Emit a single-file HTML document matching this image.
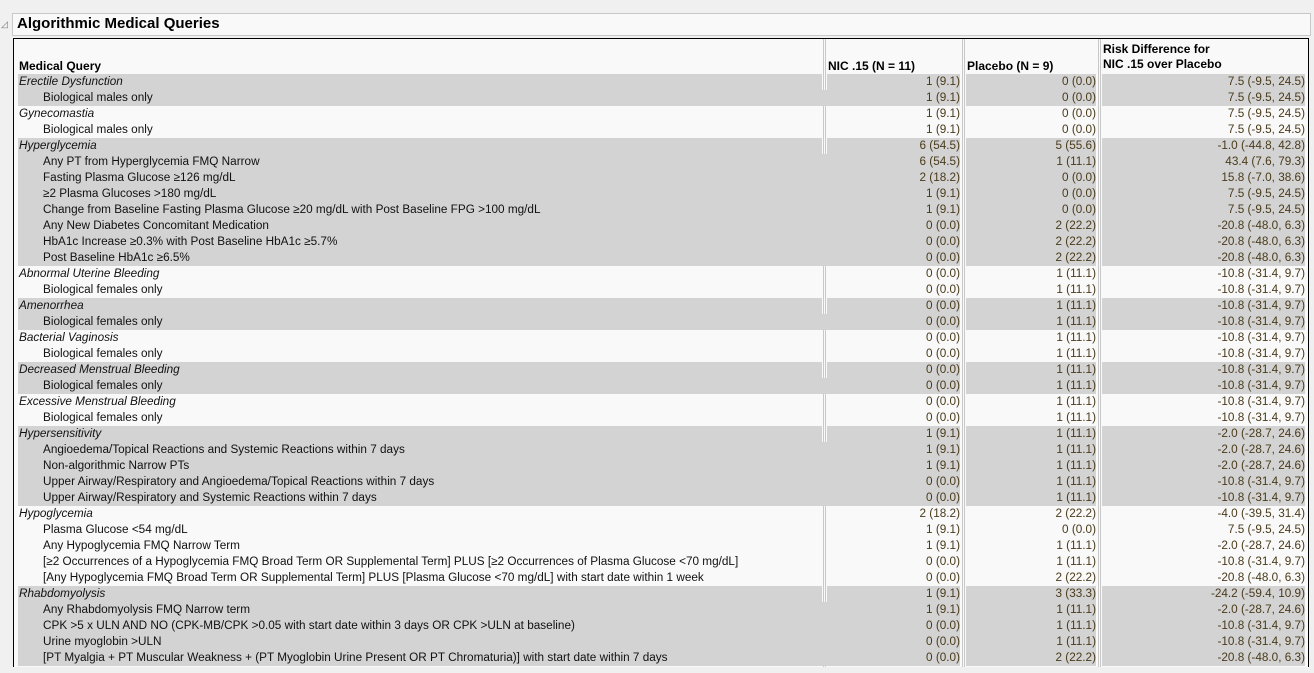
<!DOCTYPE html>
<html><head><meta charset="utf-8"><style>
body{margin:0;width:1314px;height:673px;background:#f0f0f0;font-family:"Liberation Sans",sans-serif;overflow:hidden;position:relative}
.title{position:absolute;left:12px;top:13px;width:1297px;height:21px;border:1px solid #c8c8c8;background:#f9f9f9}
.title span{position:absolute;left:4px;top:1px;font-weight:bold;font-size:15px;color:#000}
.tri{position:absolute;left:1px;top:19px;font-size:9px;color:#777}
.tbl{position:absolute;left:13px;top:38px;width:1294px;height:628px;border:1px solid #000;border-bottom:none;background:#f9f9f9;overflow:hidden}
.vl{position:absolute;top:0;height:640px;width:1px;background:#c8c8c8}
.h{position:absolute;font-weight:bold;font-size:12px;color:#000;line-height:15px}
.r{position:absolute;left:0;height:16px;width:1294px;font-size:11.75px;line-height:16px}
.r div{position:absolute;top:0;height:16px;white-space:nowrap}
.c1{left:4px;width:803px;padding-left:1px;color:#111}
.c2{left:813px;width:133px;text-align:right;color:#4a3a1a}
.c3{left:952px;width:130px;text-align:right;color:#4a3a1a}
.c4{left:1088px;width:203px;text-align:right;color:#4a3a1a}
.s div{background:#d3d3d3}
.c1 i{font-style:italic}
.in{padding-left:25px}
</style></head><body>
<div class="title"><span>Algorithmic Medical Queries</span></div>
<div class="tri">◿</div>
<div class="tbl">
<div class="vl" style="left:809px"></div><div class="vl" style="left:811px"></div>
<div class="vl" style="left:948px"></div><div class="vl" style="left:950px"></div>
<div class="vl" style="left:1084px"></div><div class="vl" style="left:1086px"></div>
<div class="h" style="left:5px;top:20px">Medical Query</div>
<div class="h" style="left:814px;top:20px">NIC .15 (N = 11)</div>
<div class="h" style="left:953px;top:20px">Placebo (N = 9)</div>
<div class="h" style="left:1089px;top:3px">Risk Difference for<br>NIC .15 over Placebo</div>

<div class="r s" style="top:35px"><div class="c1"><i>Erectile Dysfunction</i></div><div class="c2">1 (9.1)</div><div class="c3">0 (0.0)</div><div class="c4">7.5 (-9.5, 24.5)</div></div>
<div class="r s" style="top:51px"><div class="c1 in">Biological males only</div><div class="c2">1 (9.1)</div><div class="c3">0 (0.0)</div><div class="c4">7.5 (-9.5, 24.5)</div></div>
<div class="r" style="top:67px"><div class="c1"><i>Gynecomastia</i></div><div class="c2">1 (9.1)</div><div class="c3">0 (0.0)</div><div class="c4">7.5 (-9.5, 24.5)</div></div>
<div class="r" style="top:83px"><div class="c1 in">Biological males only</div><div class="c2">1 (9.1)</div><div class="c3">0 (0.0)</div><div class="c4">7.5 (-9.5, 24.5)</div></div>
<div class="r s" style="top:99px"><div class="c1"><i>Hyperglycemia</i></div><div class="c2">6 (54.5)</div><div class="c3">5 (55.6)</div><div class="c4">-1.0 (-44.8, 42.8)</div></div>
<div class="r s" style="top:115px"><div class="c1 in">Any PT from Hyperglycemia FMQ Narrow</div><div class="c2">6 (54.5)</div><div class="c3">1 (11.1)</div><div class="c4">43.4 (7.6, 79.3)</div></div>
<div class="r s" style="top:131px"><div class="c1 in">Fasting Plasma Glucose ≥126 mg/dL</div><div class="c2">2 (18.2)</div><div class="c3">0 (0.0)</div><div class="c4">15.8 (-7.0, 38.6)</div></div>
<div class="r s" style="top:147px"><div class="c1 in">≥2 Plasma Glucoses &gt;180 mg/dL</div><div class="c2">1 (9.1)</div><div class="c3">0 (0.0)</div><div class="c4">7.5 (-9.5, 24.5)</div></div>
<div class="r s" style="top:163px"><div class="c1 in">Change from Baseline Fasting Plasma Glucose ≥20 mg/dL with Post Baseline FPG &gt;100 mg/dL</div><div class="c2">1 (9.1)</div><div class="c3">0 (0.0)</div><div class="c4">7.5 (-9.5, 24.5)</div></div>
<div class="r s" style="top:179px"><div class="c1 in">Any New Diabetes Concomitant Medication</div><div class="c2">0 (0.0)</div><div class="c3">2 (22.2)</div><div class="c4">-20.8 (-48.0, 6.3)</div></div>
<div class="r s" style="top:195px"><div class="c1 in">HbA1c Increase ≥0.3% with Post Baseline HbA1c ≥5.7%</div><div class="c2">0 (0.0)</div><div class="c3">2 (22.2)</div><div class="c4">-20.8 (-48.0, 6.3)</div></div>
<div class="r s" style="top:211px"><div class="c1 in">Post Baseline HbA1c ≥6.5%</div><div class="c2">0 (0.0)</div><div class="c3">2 (22.2)</div><div class="c4">-20.8 (-48.0, 6.3)</div></div>
<div class="r" style="top:227px"><div class="c1"><i>Abnormal Uterine Bleeding</i></div><div class="c2">0 (0.0)</div><div class="c3">1 (11.1)</div><div class="c4">-10.8 (-31.4, 9.7)</div></div>
<div class="r" style="top:243px"><div class="c1 in">Biological females only</div><div class="c2">0 (0.0)</div><div class="c3">1 (11.1)</div><div class="c4">-10.8 (-31.4, 9.7)</div></div>
<div class="r s" style="top:259px"><div class="c1"><i>Amenorrhea</i></div><div class="c2">0 (0.0)</div><div class="c3">1 (11.1)</div><div class="c4">-10.8 (-31.4, 9.7)</div></div>
<div class="r s" style="top:275px"><div class="c1 in">Biological females only</div><div class="c2">0 (0.0)</div><div class="c3">1 (11.1)</div><div class="c4">-10.8 (-31.4, 9.7)</div></div>
<div class="r" style="top:291px"><div class="c1"><i>Bacterial Vaginosis</i></div><div class="c2">0 (0.0)</div><div class="c3">1 (11.1)</div><div class="c4">-10.8 (-31.4, 9.7)</div></div>
<div class="r" style="top:307px"><div class="c1 in">Biological females only</div><div class="c2">0 (0.0)</div><div class="c3">1 (11.1)</div><div class="c4">-10.8 (-31.4, 9.7)</div></div>
<div class="r s" style="top:323px"><div class="c1"><i>Decreased Menstrual Bleeding</i></div><div class="c2">0 (0.0)</div><div class="c3">1 (11.1)</div><div class="c4">-10.8 (-31.4, 9.7)</div></div>
<div class="r s" style="top:339px"><div class="c1 in">Biological females only</div><div class="c2">0 (0.0)</div><div class="c3">1 (11.1)</div><div class="c4">-10.8 (-31.4, 9.7)</div></div>
<div class="r" style="top:355px"><div class="c1"><i>Excessive Menstrual Bleeding</i></div><div class="c2">0 (0.0)</div><div class="c3">1 (11.1)</div><div class="c4">-10.8 (-31.4, 9.7)</div></div>
<div class="r" style="top:371px"><div class="c1 in">Biological females only</div><div class="c2">0 (0.0)</div><div class="c3">1 (11.1)</div><div class="c4">-10.8 (-31.4, 9.7)</div></div>
<div class="r s" style="top:387px"><div class="c1"><i>Hypersensitivity</i></div><div class="c2">1 (9.1)</div><div class="c3">1 (11.1)</div><div class="c4">-2.0 (-28.7, 24.6)</div></div>
<div class="r s" style="top:403px"><div class="c1 in">Angioedema/Topical Reactions and Systemic Reactions within 7 days</div><div class="c2">1 (9.1)</div><div class="c3">1 (11.1)</div><div class="c4">-2.0 (-28.7, 24.6)</div></div>
<div class="r s" style="top:419px"><div class="c1 in">Non-algorithmic Narrow PTs</div><div class="c2">1 (9.1)</div><div class="c3">1 (11.1)</div><div class="c4">-2.0 (-28.7, 24.6)</div></div>
<div class="r s" style="top:435px"><div class="c1 in">Upper Airway/Respiratory and Angioedema/Topical Reactions within 7 days</div><div class="c2">0 (0.0)</div><div class="c3">1 (11.1)</div><div class="c4">-10.8 (-31.4, 9.7)</div></div>
<div class="r s" style="top:451px"><div class="c1 in">Upper Airway/Respiratory and Systemic Reactions within 7 days</div><div class="c2">0 (0.0)</div><div class="c3">1 (11.1)</div><div class="c4">-10.8 (-31.4, 9.7)</div></div>
<div class="r" style="top:467px"><div class="c1"><i>Hypoglycemia</i></div><div class="c2">2 (18.2)</div><div class="c3">2 (22.2)</div><div class="c4">-4.0 (-39.5, 31.4)</div></div>
<div class="r" style="top:483px"><div class="c1 in">Plasma Glucose &lt;54 mg/dL</div><div class="c2">1 (9.1)</div><div class="c3">0 (0.0)</div><div class="c4">7.5 (-9.5, 24.5)</div></div>
<div class="r" style="top:499px"><div class="c1 in">Any Hypoglycemia FMQ Narrow Term</div><div class="c2">1 (9.1)</div><div class="c3">1 (11.1)</div><div class="c4">-2.0 (-28.7, 24.6)</div></div>
<div class="r" style="top:515px"><div class="c1 in">[≥2 Occurrences of a Hypoglycemia FMQ Broad Term OR Supplemental Term] PLUS [≥2 Occurrences of Plasma Glucose &lt;70 mg/dL]</div><div class="c2">0 (0.0)</div><div class="c3">1 (11.1)</div><div class="c4">-10.8 (-31.4, 9.7)</div></div>
<div class="r" style="top:531px"><div class="c1 in">[Any Hypoglycemia FMQ Broad Term OR Supplemental Term] PLUS [Plasma Glucose &lt;70 mg/dL] with start date within 1 week</div><div class="c2">0 (0.0)</div><div class="c3">2 (22.2)</div><div class="c4">-20.8 (-48.0, 6.3)</div></div>
<div class="r s" style="top:547px"><div class="c1"><i>Rhabdomyolysis</i></div><div class="c2">1 (9.1)</div><div class="c3">3 (33.3)</div><div class="c4">-24.2 (-59.4, 10.9)</div></div>
<div class="r s" style="top:563px"><div class="c1 in">Any Rhabdomyolysis FMQ Narrow term</div><div class="c2">1 (9.1)</div><div class="c3">1 (11.1)</div><div class="c4">-2.0 (-28.7, 24.6)</div></div>
<div class="r s" style="top:579px"><div class="c1 in">CPK &gt;5 x ULN AND NO (CPK-MB/CPK &gt;0.05 with start date within 3 days OR CPK &gt;ULN at baseline)</div><div class="c2">0 (0.0)</div><div class="c3">1 (11.1)</div><div class="c4">-10.8 (-31.4, 9.7)</div></div>
<div class="r s" style="top:595px"><div class="c1 in">Urine myoglobin &gt;ULN</div><div class="c2">0 (0.0)</div><div class="c3">1 (11.1)</div><div class="c4">-10.8 (-31.4, 9.7)</div></div>
<div class="r s" style="top:611px"><div class="c1 in">[PT Myalgia + PT Muscular Weakness + (PT Myoglobin Urine Present OR PT Chromaturia)] with start date within 7 days</div><div class="c2">0 (0.0)</div><div class="c3">2 (22.2)</div><div class="c4">-20.8 (-48.0, 6.3)</div></div>
</div>
</body></html>
